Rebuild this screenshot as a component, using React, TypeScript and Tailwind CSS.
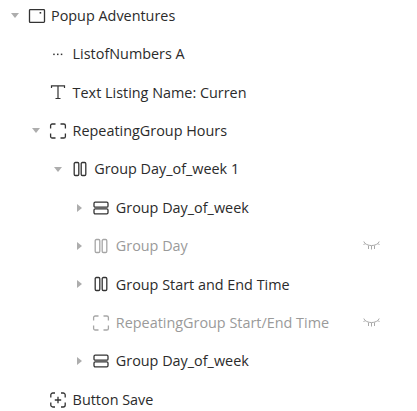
import React from "react";

type IconKind = "popup" | "dots" | "text" | "repeat" | "cols" | "rows" | "button";

const Icon = ({ kind }: { kind: IconKind }) => {
  const common = { width: 18, height: 18, viewBox: "0 0 18 18", fill: "none", stroke: "currentColor", strokeWidth: 1.3 };
  switch (kind) {
    case "popup":
      return (
        <svg {...common}>
          <rect x="1.5" y="2.6" width="15" height="12.8" rx="0.8" />
          <rect x="11.6" y="5" width="1.6" height="1.6" fill="currentColor" stroke="none" />
        </svg>
      );
    case "dots":
      return (
        <svg {...common}>
          <g fill="currentColor" stroke="none">
            <rect x="4.2" y="8.6" width="1.5" height="1.5" />
            <rect x="8" y="8.6" width="1.5" height="1.5" />
            <rect x="11.8" y="8.6" width="1.5" height="1.5" />
          </g>
        </svg>
      );
    case "text":
      return (
        <svg {...common} strokeWidth={1.2}>
          <path d="M2.5 5V2.8H15.5V5M9 2.8V15.5M6.5 15.5H11.5" />
        </svg>
      );
    case "repeat":
      return (
        <svg {...common}>
          <path d="M1.6 6.5V3.6a1.6 1.6 0 0 1 1.6-1.6H6.5M11.5 2h3.3a1.6 1.6 0 0 1 1.6 1.6V6.5M16.4 11.5V14.4a1.6 1.6 0 0 1-1.6 1.6H11.5M6.5 16H3.2a1.6 1.6 0 0 1-1.6-1.6V11.5" />
        </svg>
      );
    case "cols":
      return (
        <svg {...common}>
          <rect x="3.2" y="2.5" width="4.6" height="13" rx="1.2" />
          <rect x="10.2" y="2.5" width="4.6" height="13" rx="1.2" />
        </svg>
      );
    case "rows":
      return (
        <svg {...common}>
          <rect x="2" y="3.2" width="14" height="5" rx="1.2" />
          <rect x="2" y="9.8" width="14" height="5" rx="1.2" />
        </svg>
      );
    case "button":
      return (
        <svg {...common}>
          <path d="M1.8 6.5V4a2 2 0 0 1 2-2H6M12 2h2.2a2 2 0 0 1 2 2V6.5M16.2 11.5V14a2 2 0 0 1-2 2H12M6 16H3.8a2 2 0 0 1-2-2V11.5" />
          <path d="M9 5.8v6.4M5.8 9h6.4" />
        </svg>
      );
  }
};

const Eye = () => (
  <svg width="17" height="11" viewBox="0 0 17 11" fill="none" stroke="#a8a8a8" strokeWidth="1">
    <path d="M2 3.5C6 6.2 11 6.2 15 3.5M2 3.5L0.8 1.5M2 3.5L0.5 5M15 3.5L16.2 1.5M15 3.5L16.5 5M5.5 5.5V9M8.5 6V9.5M11.5 5.5V9" />
  </svg>
);

const Caret = ({ dir }: { dir?: "down" | "right" }) => {
  if (!dir) return null;
  return dir === "down" ? (
    <svg width="8" height="5" viewBox="0 0 8 5"><path d="M0 0H8L4 5Z" fill="#adadad" /></svg>
  ) : (
    <svg width="5" height="8" viewBox="0 0 5 8"><path d="M0 0V8L5 4Z" fill="#adadad" /></svg>
  );
};

type Row = { depth: number; caret?: "down" | "right"; icon: IconKind; label: string; hidden?: boolean };

const rows: Row[] = [
  { depth: 0, caret: "down", icon: "popup", label: "Popup Adventures" },
  { depth: 1, icon: "dots", label: "ListofNumbers A" },
  { depth: 1, icon: "text", label: "Text Listing Name: Curren" },
  { depth: 1, caret: "down", icon: "repeat", label: "RepeatingGroup Hours" },
  { depth: 2, caret: "down", icon: "cols", label: "Group Day_of_week 1" },
  { depth: 3, caret: "right", icon: "rows", label: "Group Day_of_week" },
  { depth: 3, caret: "right", icon: "cols", label: "Group Day", hidden: true },
  { depth: 3, caret: "right", icon: "cols", label: "Group Start and End Time" },
  { depth: 3, icon: "repeat", label: "RepeatingGroup Start/End Time", hidden: true },
  { depth: 3, caret: "right", icon: "rows", label: "Group Day_of_week" },
  { depth: 1, icon: "button", label: "Button Save" },
];

const pad = ["pl-[7.5px]", "pl-[29.1px]", "pl-[50.7px]", "pl-[72.3px]"];

export default function App() {
  return (
    <div className="w-[417px] h-[411px] overflow-hidden bg-white pt-[5.6px] flex flex-col gap-[18.4px] font-['Open_Sans',sans-serif] text-[14.4px]">
      {rows.map((r, i) => (
        <div key={i} className={`flex items-center h-5 pr-[37px] ${pad[r.depth]}`}>
          <span className="w-[14px] flex justify-center shrink-0"><Caret dir={r.caret} /></span>
          <span className={`w-[29.5px] pl-[6px] shrink-0 flex ${r.hidden ? "text-[#a6a6a6]" : "text-[#333333]"}`}>
            <Icon kind={r.icon} />
          </span>
          <span className={`flex-1 whitespace-nowrap ${r.hidden ? "text-[#9a9a9a]" : "text-[#2b2b2b]"}`}>{r.label}</span>
          {r.hidden && <Eye />}
        </div>
      ))}
    </div>
  );
}
